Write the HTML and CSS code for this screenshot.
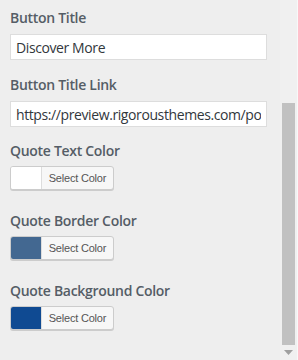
FILE: index.html
```html
<!DOCTYPE html>
<html lang="en">
<head>
    <meta charset="UTF-8">
    <meta name="viewport" content="width=device-width, initial-scale=1.0">
    <title>Customizer Panel</title>
    <link rel="stylesheet" href="styles.css">
</head>
<body>
    <div class="panel">
        <div class="controls">
            <div class="control text-control">
                <label class="control-label" for="btnTitle">Button Title</label>
                <input class="text-input" type="text" id="btnTitle" value="Discover More">
            </div>

            <div class="control text-control">
                <label class="control-label" for="btnLink">Button Title Link</label>
                <input class="text-input" type="text" id="btnLink" value="https://preview.rigorousthemes.com/portfolio">
            </div>

            <div class="control color-control">
                <span class="control-label">Quote Text Color</span>
                <button class="color-picker" type="button">
                    <span class="swatch swatch-white"></span>
                    <span class="picker-text">Select Color</span>
                </button>
            </div>

            <div class="control color-control">
                <span class="control-label">Quote Border Color</span>
                <button class="color-picker" type="button">
                    <span class="swatch swatch-border"></span>
                    <span class="picker-text">Select Color</span>
                </button>
            </div>

            <div class="control color-control">
                <span class="control-label">Quote Background Color</span>
                <button class="color-picker" type="button">
                    <span class="swatch swatch-bg"></span>
                    <span class="picker-text">Select Color</span>
                </button>
            </div>
        </div>

        <!-- fake scrollbar of the customizer section -->
        <div class="scrollbar">
            <div class="scroll-track">
                <div class="scroll-thumb"></div>
            </div>
            <div class="scroll-arrow">
                <svg width="9" height="5" viewBox="0 0 9 5"><path d="M0 0h9L4.5 5z" fill="#a0a0a0"/></svg>
            </div>
        </div>
    </div>
</body>
</html>
```

FILE: styles.css
```css
html, body {
    margin: 0;
    padding: 0;
    height: 100%;
}
body {
    font-family: 'Open Sans', 'Noto Sans', sans-serif;
    background-color: #eeeeee;
    color: #555d66;
    overflow: hidden;
}
.panel {
    display: flex;
    height: 360px;
}
.controls {
    width: 270px;
    padding: 8px 0 0 10px;
    box-sizing: border-box;
}
.control {
    display: flex;
    flex-direction: column;
    align-items: flex-start;
}
.control-label {
    display: block;
    font-size: 14px;
    font-weight: 600;
    line-height: 20px;
    letter-spacing: -0.3px;
    color: #555d66;
    white-space: nowrap;
}
.text-control .control-label {
    margin-bottom: 6px;
}
.text-control {
    margin-bottom: 15px;
}
.text-control + .text-control {
    margin-bottom: 14px;
}
.text-input {
    width: 257px;
    height: 26px;
    box-sizing: border-box;
    margin: 0;
    padding: 0 5px;
    border: 1px solid #dddddd;
    background-color: #fff;
    font-family: inherit;
    font-size: 14px;
    letter-spacing: -0.4px;
    color: #32373c;
    outline: none;
}
.color-control .control-label {
    margin-bottom: 5px;
}
.color-control {
    margin-bottom: 21px;
}
.color-picker {
    display: flex;
    height: 24px;
    box-sizing: border-box;
    padding: 0;
    margin: 0;
    border: 1px solid #cccccc;
    border-radius: 3px;
    background-color: #f7f7f7;
    box-shadow: 0 1px 0 #cccccc;
    overflow: hidden;
    cursor: pointer;
}
.swatch {
    width: 30px;
    height: 100%;
    border-right: 1px solid #dddddd;
}
.swatch-white {
    background-color: #ffffff;
}
.swatch-border {
    background-color: #436891;
}
.swatch-bg {
    background-color: #0f4a92;
}
.picker-text {
    width: 71px;
    line-height: 22px;
    font-family: inherit;
    font-size: 11px;
    color: #555555;
    text-align: center;
    letter-spacing: -0.2px;
}
.scrollbar {
    width: 17px;
    margin-left: 10px;
    display: flex;
    flex-direction: column;
    background-color: #f0f0f0;
    border-right: 1px solid #f8f8f8;
}
.scroll-track {
    flex: 1;
    padding: 103px 2px 0 2px;
    display: flex;
}
.scroll-thumb {
    flex: 1;
    background-color: #c1c1c1;
}
.scroll-arrow {
    height: 15px;
    display: flex;
    align-items: center;
    justify-content: center;
}
```
